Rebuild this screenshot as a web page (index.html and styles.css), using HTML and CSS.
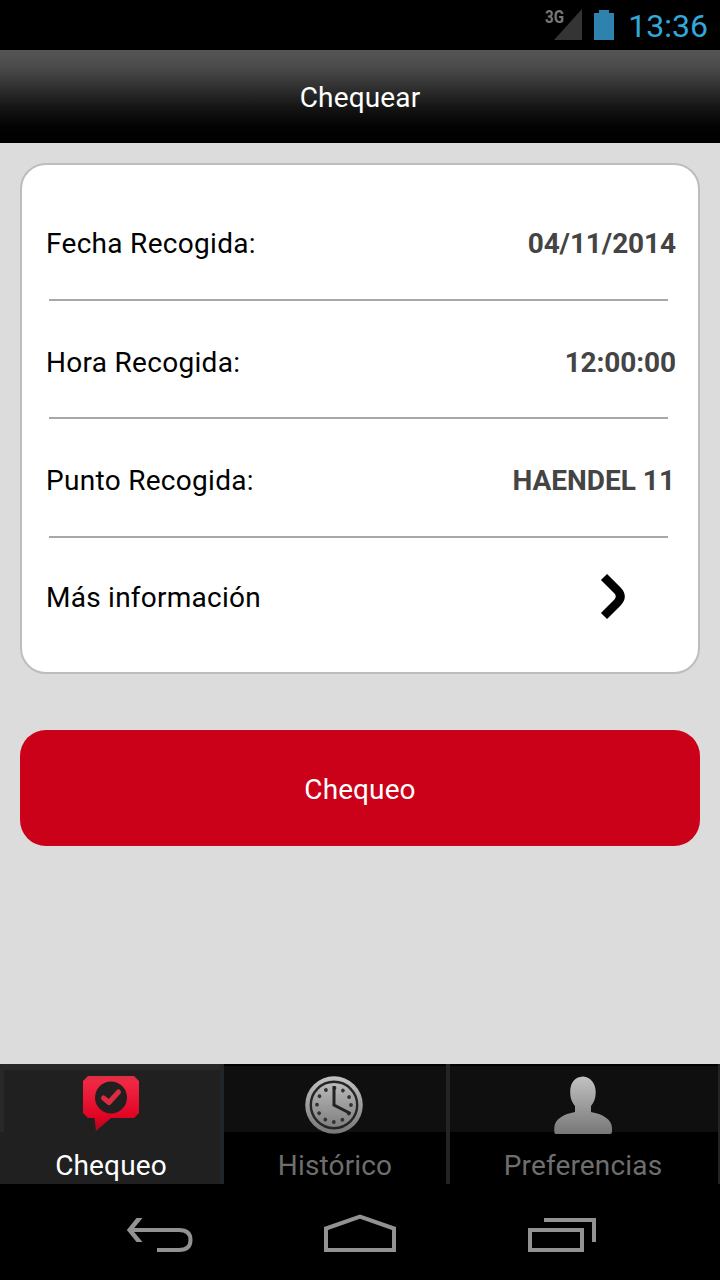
FILE: index.html
```html
<!DOCTYPE html>
<html lang="es">
<head>
<meta charset="utf-8">
<title>Chequear</title>
<link rel="stylesheet" href="styles.css">
</head>
<body>
<div class="screen">
  <div class="status">
    <svg class="status-icons" width="80" height="50" viewBox="540 0 80 50">
      <path d="M582 9V40H554Z" fill="#343434"/>
      <text class="net" x="545" y="23" textLength="19" lengthAdjust="spacingAndGlyphs">3G</text>
      <path d="M594 13h5v-3h10v3h5v27h-20z" fill="#2d83ad"/>
    </svg>
    <span class="time">13:36</span>
  </div>
  <header class="header">Chequear</header>
  <main class="content">
    <section class="card">
      <div class="row"><span class="label">Fecha Recogida:</span><b class="value">04/11/2014</b></div>
      <div class="row second"><span class="label">Hora Recogida:</span><b class="value">12:00:00</b></div>
      <div class="row"><span class="label">Punto Recogida:</span><b class="value address">HAENDEL 11</b></div>
      <div class="row more"><span>Más información</span>
        <svg class="chevron" width="26" height="48" viewBox="600 572 26 48"><path d="M604 577L617.300 590.300Q623.300 596.500 617.300 602.700L604 616" fill="none" stroke="#000" stroke-width="8.600"/></svg>
      </div>
    </section>
    <button class="action">Chequeo</button>
  </main>
  <nav class="tabs">
    <div class="tab active">
      <svg width="60" height="60" viewBox="81 1074 60 60">
        <defs><linearGradient id="red" x1="0" y1="0" x2="0" y2="1"><stop offset="0" stop-color="#d82f45"/><stop offset=".1" stop-color="#f02843"/><stop offset=".3" stop-color="#ed1d3c"/><stop offset=".75" stop-color="#e00322"/><stop offset="1" stop-color="#a40a20"/></linearGradient></defs>
        <path d="M88 1076H134L139 1081V1113L134 1118H111L96 1131L94.500 1118H88L83 1113V1081Z" fill="url(#red)"/>
        <circle cx="111" cy="1097.500" r="16" fill="#202020"/>
        <path d="M103.500 1098L109 1102.500L118.500 1092" fill="none" stroke="#dd2b42" stroke-width="5" stroke-linecap="round" stroke-linejoin="round"/>
      </svg>
      <span>Chequeo</span>
    </div>
    <div class="tab history">
      <svg width="60" height="60" viewBox="304 1074 60 60">
        <defs><linearGradient id="gray" x1="0" y1="0" x2="0" y2="1"><stop offset="0" stop-color="#c2c2c2"/><stop offset="1" stop-color="#777"/></linearGradient></defs>
        <circle cx="334" cy="1105" r="28.800" fill="url(#gray)"/>
        <circle cx="334" cy="1105" r="23.200" fill="none" stroke="#252525" stroke-width="2.400"/>
        <circle cx="334" cy="1105" r="17" fill="none" stroke="#333" stroke-width="3.800" stroke-linecap="round" stroke-dasharray="0.010 8.891"/>
        <path d="M334 1086V1105L350.500 1113.500" fill="none" stroke="#222" stroke-width="3"/>
      </svg>
      <span>Histórico</span>
    </div>
    <div class="tab">
      <svg width="60" height="60" viewBox="553 1074 60 60">
        <path d="M583 1076.500C591 1077 595.700 1084 595.700 1092C595.700 1099 593.500 1103 591 1106V1112C602 1114 612 1119 612 1128V1132Q612 1134 610 1134H556Q554.300 1134 554.300 1132V1128C554.300 1119 564 1114 575 1112V1106C572.500 1103 570.200 1099 570.200 1092C570.200 1083 574.500 1077 583 1076.500Z" fill="url(#gray)"/>
      </svg>
      <span>Preferencias</span>
    </div>
  </nav>
  <div class="navbar">
    <svg width="720" height="96" viewBox="0 1184 720 96" fill="none" stroke="#929292" stroke-width="4">
      <path d="M157 1250H179C187 1250 190.500 1246 190.500 1240S187 1230 179 1230H132"/>
      <path d="M136.500 1218H142.500L132.500 1230L142.500 1242H136.500L126.800 1230Z" fill="#929292" stroke="none"/>
      <path d="M326 1250V1228.500L360 1216.500L394 1228.500V1250Z"/>
      <path d="M530 1230H582V1250H530ZM544 1220H594V1242"/>
    </svg>
  </div>
</div>
</body>
</html>
```
FILE: styles.css
```css
* { box-sizing: border-box; }
body { margin: 0; background: #000; }
.screen {
  width: 720px;
  height: 1280px;
  display: flex;
  flex-direction: column;
  overflow: hidden;
  font-family: Roboto, "Noto Sans", sans-serif;
  font-size: 28px;
  line-height: 34px;
}
.status {
  height: 50px;
  display: flex;
  align-items: center;
  justify-content: flex-end;
  padding-right: 12px;
  background: #000;
}
.status-icons { flex: none; margin-right: 8px; }
.net { font: bold 18px Roboto, sans-serif; fill: #777; }
.time { color: #33a8dc; font-size: 32px; padding-top: 2px; }
.header {
  height: 93px;
  padding-top: 31px;
  text-align: center;
  letter-spacing: .15px;
  color: #fff;
  background: linear-gradient(#555 0%, #4b4b4b 18%, #333 38%, #141414 62%, #030303 82%, #000 100%);
}
.content {
  height: 921px;
  padding: 20px 20px 0;
  background: #dcdcdc;
}
.card {
  height: 511px;
  padding: 17px 22px 0 24px;
  border: 2px solid #bdbdbd;
  border-radius: 26px;
  background: #fff;
  color: #000;
}
.row {
  height: 118.5px;
  display: flex;
  justify-content: space-between;
  align-items: center;
  padding-top: 5px;
  background: linear-gradient(#a8a8a8, #a8a8a8) 3px 100% / 619px 2px no-repeat;
}
.second { padding-top: 6px; }
.label { letter-spacing: .3px; }
.value { color: #444; letter-spacing: -.1px; }
.address { padding-right: 1px; letter-spacing: 0; }
.more { background: none; padding-top: 3px; letter-spacing: .25px; }
.chevron { margin: -5px 50px 0 0; }
.action {
  display: block;
  width: 680px;
  height: 116px;
  margin-top: 56px;
  padding: 3px 0 0;
  border: 0;
  border-radius: 26px;
  background: #cb0019;
  color: #fff;
  font: inherit;
  letter-spacing: .1px;
}
.tabs {
  height: 120px;
  display: grid;
  grid-template-columns: 224px 226px 270px;
  background: #000;
}
.tab {
  display: flex;
  flex-direction: column;
  align-items: center;
  padding: 10px 2px 0 0;
  gap: 15px;
  border-right: 4px solid #242424;
  letter-spacing: .15px;
  color: #6e6e6e;
  background: linear-gradient(#020202 2px, #0f0f0f 2px, #0f0f0f 68px, #000 68px);
}
.tab.active {
  padding: 10px 0 0 2px;
  color: #fff;
  border-right-color: #20252a;
  background:
    linear-gradient(#282828, #282828) 0 0 / 4px 68px no-repeat,
    linear-gradient(#282828, #282828) 0 0 / 100% 6px no-repeat,
    #202020;
}
.history span { margin-left: 2px; }
.tab:last-child { border-right-width: 2px; }
.navbar { height: 96px; background: #000; }
.navbar svg { display: block; }
```
